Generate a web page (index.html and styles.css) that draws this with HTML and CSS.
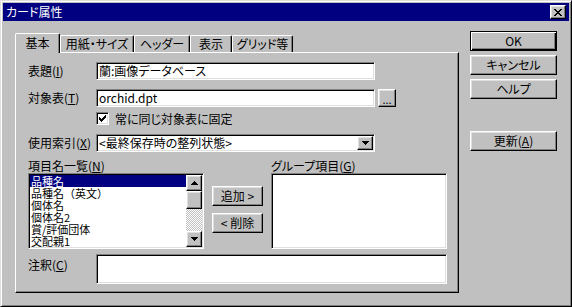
FILE: index.html
```html
<!DOCTYPE html>
<html lang="ja">
<head>
<meta charset="utf-8">
<title>カード属性</title>
<link rel="stylesheet" href="styles.css">
</head>
<body>
<div class="window">
  <div class="titlebar">
    <span class="title">カード属性</span>
    <div class="raised close-btn">
      <svg width="8" height="7" viewBox="0 0 8 7" shape-rendering="crispEdges"><g fill="#000">
        <rect x="0" y="0" width="2" height="1"/><rect x="6" y="0" width="2" height="1"/>
        <rect x="1" y="1" width="2" height="1"/><rect x="5" y="1" width="2" height="1"/>
        <rect x="2" y="2" width="4" height="1"/>
        <rect x="3" y="3" width="2" height="1"/>
        <rect x="2" y="4" width="4" height="1"/>
        <rect x="1" y="5" width="2" height="1"/><rect x="5" y="5" width="2" height="1"/>
        <rect x="0" y="6" width="2" height="1"/><rect x="6" y="6" width="2" height="1"/>
      </g></svg>
    </div>
  </div>
  <div class="client">
    <div class="tabctrl">
      <div class="tabstrip">
        <div class="tab active tab-kihon">基本</div>
        <div class="tab tab-paper">用紙・サイズ</div>
        <div class="tab tab-header">ヘッダー</div>
        <div class="tab tab-view">表示</div>
        <div class="tab tab-grid">グリッド等</div>
      </div>
      <div class="panel">
        <div class="row">
          <span class="lbl">表題(<u>I</u>)</span>
          <div class="sunken field field-main">蘭:画像データベース</div>
        </div>
        <div class="row row-target">
          <span class="lbl">対象表(<u>T</u>)</span>
          <div class="sunken field field-main">orchid.dpt</div>
          <div class="raised btn-browse">...</div>
        </div>
        <div class="row row-check">
          <span class="lbl"></span>
          <div class="sunken checkbox">
            <svg width="7" height="7" viewBox="0 0 7 7" shape-rendering="crispEdges"><g fill="#000">
              <rect x="6" y="0" width="1" height="1"/>
              <rect x="5" y="1" width="2" height="1"/>
              <rect x="0" y="2" width="1" height="1"/><rect x="4" y="2" width="3" height="1"/>
              <rect x="0" y="3" width="2" height="1"/><rect x="3" y="3" width="3" height="1"/>
              <rect x="0" y="4" width="5" height="1"/>
              <rect x="1" y="5" width="3" height="1"/>
              <rect x="2" y="6" width="1" height="1"/>
            </g></svg>
          </div>
          <span class="check-label">常に同じ対象表に固定</span>
        </div>
        <div class="row row-index">
          <span class="lbl">使用索引(<u>X</u>)</span>
          <div class="sunken field field-main combo">
            <span class="combo-text">&lt;最終保存時の整列状態&gt;</span>
            <div class="raised combo-btn">
              <svg width="7" height="4" viewBox="0 0 7 4" shape-rendering="crispEdges"><g fill="#000">
                <rect x="0" y="0" width="7" height="1"/><rect x="1" y="1" width="5" height="1"/>
                <rect x="2" y="2" width="3" height="1"/><rect x="3" y="3" width="1" height="1"/>
              </g></svg>
            </div>
          </div>
        </div>
        <div class="lists">
          <span class="lbl-list">項目名一覧(<u>N</u>)</span>
          <span></span>
          <span class="lbl-list">グループ項目(<u>G</u>)</span>
          <div class="sunken listbox">
            <ul class="items">
              <li class="item selected">品種名</li>
              <li class="item">品種名（英文）</li>
              <li class="item">個体名</li>
              <li class="item">個体名2</li>
              <li class="item">賞/評価団体</li>
              <li class="item">交配親1</li>
            </ul>
            <div class="scrollbar">
              <div class="raised sb-btn">
                <svg width="7" height="4" viewBox="0 0 7 4" shape-rendering="crispEdges"><g fill="#000">
                  <rect x="3" y="0" width="1" height="1"/><rect x="2" y="1" width="3" height="1"/>
                  <rect x="1" y="2" width="5" height="1"/><rect x="0" y="3" width="7" height="1"/>
                </g></svg>
              </div>
              <div class="raised sb-thumb"></div>
              <div class="sb-track"></div>
              <div class="raised sb-btn">
                <svg width="7" height="4" viewBox="0 0 7 4" shape-rendering="crispEdges"><g fill="#000">
                  <rect x="0" y="0" width="7" height="1"/><rect x="1" y="1" width="5" height="1"/>
                  <rect x="2" y="2" width="3" height="1"/><rect x="3" y="3" width="1" height="1"/>
                </g></svg>
              </div>
            </div>
          </div>
          <div class="move-btns">
            <div class="raised btn-move">追加 &gt;</div>
            <div class="raised btn-move">&lt; 削除</div>
          </div>
          <div class="sunken listbox"></div>
        </div>
        <div class="row row-note">
          <span class="lbl lbl-top">注釈(<u>C</u>)</span>
          <div class="sunken field field-note"></div>
        </div>
      </div>
    </div>
    <div class="side">
      <div class="btn default">OK</div>
      <div class="raised btn">キャンセル</div>
      <div class="raised btn">ヘルプ</div>
      <div class="raised btn btn-update">更新(<u>A</u>)</div>
    </div>
  </div>
</div>
</body>
</html>
```

FILE: styles.css
```css
* { box-sizing: border-box; margin: 0; padding: 0; }
html, body { width: 572px; height: 307px; overflow: hidden; }
body {
  background: #c0c0c0;
  font-family: "Noto Sans CJK JP", "Noto Sans", sans-serif;
  font-size: 12px;
  line-height: 14px;
  color: #000;
  font-feature-settings: "palt";
}
u { text-decoration: underline; text-underline-offset: 1px; }

.raised {
  background: #c0c0c0;
  border: 1px solid;
  border-color: #fff #000 #000 #fff;
  box-shadow: inset -1px -1px #808080, inset 1px 1px #dfdfdf;
}
.sunken {
  background: #fff;
  border: 1px solid;
  border-color: #808080 #fff #fff #808080;
  box-shadow: inset 1px 1px #000, inset -1px -1px #dfdfdf;
  padding: 1px;
}

.window {
  width: 572px;
  height: 307px;
  border: 1px solid;
  border-color: #dfdfdf #000 #000 #dfdfdf;
  box-shadow: inset 1px 1px #fff, inset -1px -1px #808080;
  padding: 2px;
  display: flex;
  flex-direction: column;
  background: #c0c0c0;
}
.titlebar {
  height: 18px;
  flex: none;
  background: #000080;
  color: #fff;
  display: flex;
  align-items: center;
  justify-content: space-between;
  padding: 0 3px 0 3px;
}
.title { line-height: 18px; }
.close-btn {
  width: 16px;
  height: 14px;
  display: flex;
  align-items: center;
  justify-content: center;
}
.close-btn svg { display: block; margin: 0 0 0 -1px; }

.client {
  flex: 1;
  display: flex;
  gap: 11px;
  padding: 10px 12px 0 12px;
}
.tabctrl {
  width: 444px;
  height: 260px;
  margin-top: 2px;
  display: flex;
  flex-direction: column;
}
.tabstrip {
  height: 19px;
  flex: none;
  display: flex;
  align-items: flex-end;
  position: relative;
  z-index: 1;
}
.tab {
  height: 17px;
  border-top: 1px solid #fff;
  border-left: 1px solid #fff;
  border-right: 1px solid #000;
  box-shadow: inset -1px 0 #808080;
  background: #c0c0c0;
  text-align: center;
  line-height: 16px;
  border-radius: 2px 2px 0 0;
}
.tab.active {
  height: 20px;
  margin-bottom: -1px;
  line-height: 18px;
}
.tab-kihon { width: 45px; }
.tab-paper { width: 74px; }
.tab-header { width: 56px; }
.tab-view { width: 42px; }
.tab-grid { width: 61px; }

.panel {
  flex: 1;
  border: 1px solid;
  border-color: #fff #000 #000 #fff;
  box-shadow: inset -1px -1px #808080;
  padding: 9px 11px 0 12px;
  display: flex;
  flex-direction: column;
}
.row {
  display: flex;
  align-items: center;
  height: 18px;
  flex: none;
}
.row-target { margin-top: 9px; }
.row-check { margin-top: 5px; height: 13px; }
.row-index { margin-top: 9px; }
.row-note { margin-top: 5px; height: 30px; align-items: flex-start; }
.lbl { width: 68px; flex: none; }
.lbl-top { padding-top: 4px; }

.field {
  height: 18px;
  line-height: 14px;
  padding-left: 2px;
  white-space: nowrap;
  overflow: hidden;
}
.field-main { width: 279px; }
.field-note { width: 351px; height: 30px; }
.btn-browse {
  width: 18px;
  height: 18px;
  margin-left: 3px;
  text-align: center;
  line-height: 18px;
  font-size: 11px;
}
.checkbox {
  width: 13px;
  height: 13px;
  display: flex;
  align-items: center;
  justify-content: center;
}
.checkbox svg { display: block; }
.check-label { margin-left: 6px; }

.combo {
  display: flex;
  align-items: center;
  justify-content: space-between;
  padding: 1px 1px 1px 2px;
}
.combo-btn {
  width: 16px;
  height: 14px;
  display: flex;
  align-items: center;
  justify-content: center;
}
.combo-btn svg, .sb-btn svg { display: block; }

.lists {
  display: grid;
  grid-template-columns: 176px 51px 176px;
  grid-template-rows: 15px 76px;
  column-gap: 8px;
  margin-top: 6px;
  flex: none;
}
.lbl-list { line-height: 15px; }
.listbox {
  display: flex;
  overflow: hidden;
}
.items {
  list-style: none;
  flex: 1;
  overflow: hidden;
}
.item {
  height: 12px;
  line-height: 12px;
  font-size: 11px;
  font-feature-settings: normal;
  padding-left: 1px;
  white-space: nowrap;
}
.item.selected { background: #000080; color: #fff; }
.scrollbar {
  width: 16px;
  flex: none;
  display: flex;
  flex-direction: column;
}
.sb-btn {
  height: 16px;
  flex: none;
  display: flex;
  align-items: center;
  justify-content: center;
}
.sb-thumb { height: 18px; flex: none; }
.sb-track {
  flex: 1;
  background: repeating-conic-gradient(#fff 0 25%, #c0c0c0 0 50%) 0 0 / 2px 2px;
}
.move-btns {
  display: flex;
  flex-direction: column;
  gap: 7px;
  padding-top: 13px;
}
.btn-move {
  height: 20px;
  text-align: center;
  line-height: 18px;
}

.side {
  width: 87px;
  display: flex;
  flex-direction: column;
  gap: 4px;
}
.btn {
  height: 20px;
  text-align: center;
  line-height: 18px;
}
.default {
  background: #c0c0c0;
  border: 1px solid #000;
  box-shadow: inset 1px 1px #fff, inset -1px -1px #000, inset -2px -2px #808080;
}
.btn-update { margin-top: 28px; }
```
